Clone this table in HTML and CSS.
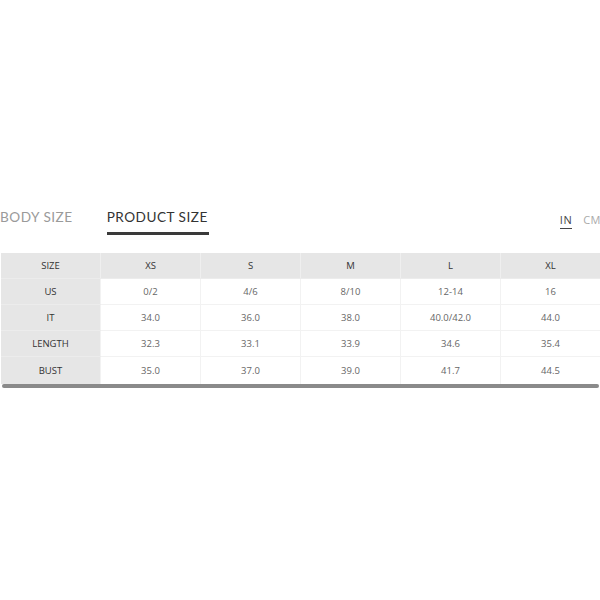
FILE: index.html
```html
<!DOCTYPE html>
<html>
<head>
<meta charset="utf-8">
<link rel="stylesheet" href="styles.css">
</head>
<body>
<div class="wrap">
  <div class="tabs">
    <div class="tab">BODY SIZE</div>
    <div class="tab active">PRODUCT SIZE</div>
    <div class="units">
      <span class="unit on">IN</span>
      <span class="unit">CM</span>
    </div>
  </div>
  <table class="chart">
    <tr class="head">
      <th>SIZE</th><th>XS</th><th>S</th><th>M</th><th>L</th><th>XL</th>
    </tr>
    <tr><th>US</th><td>0/2</td><td>4/6</td><td>8/10</td><td>12-14</td><td>16</td></tr>
    <tr><th>IT</th><td>34.0</td><td>36.0</td><td>38.0</td><td>40.0/42.0</td><td>44.0</td></tr>
    <tr><th>LENGTH</th><td>32.3</td><td>33.1</td><td>33.9</td><td>34.6</td><td>35.4</td></tr>
    <tr><th>BUST</th><td>35.0</td><td>37.0</td><td>39.0</td><td>41.7</td><td>44.5</td></tr>
  </table>
  <div class="bar"></div>
</div>
</body>
</html>
```
FILE: styles.css
```css
html, body { margin: 0; padding: 0; background: #fff; }
body { font-family: "Open Sans", "Liberation Sans", sans-serif; }
.wrap { padding: 208px 0 0 1px; width: 598px; }
.tabs { display: flex; align-items: flex-start; height: 45px; }
.tab {
  font-family: "Lato", "Open Sans", sans-serif;
  font-size: 13.6px; letter-spacing: 0.5px; color: #9a9a9a;
  margin-left: -1px; padding-bottom: 6px; line-height: 18px;
}
.tab.active {
  color: #333; margin-left: 34px; border-bottom: 3px solid #3a3a3a;
  padding-right: 1px;
}
.units { margin-left: auto; display: flex; gap: 11px; padding-top: 5px; margin-right: -2px; }
.unit {
  font-size: 11px; letter-spacing: 0.5px; color: #aaa; line-height: 14px;
}
.unit.on { color: #444; border-bottom: 1px solid #444; padding-bottom: 1px; }
.chart {
  width: 598px; border-collapse: collapse; table-layout: fixed;
  font-size: 9.5px;
}
.chart th, .chart td {
  height: 25px; padding: 0; text-align: center; vertical-align: middle;
}
.chart th {
  width: 99px; background: #e6e6e6; color: #333; font-weight: 400;
  border-bottom: 1px solid #ececec;
}
.chart td { color: #666; border: 1px solid #f2f2f2; border-top: 0; }
.chart tr:last-child th, .chart tr:last-child td { border-bottom: 0; height: 27px; }
.chart .head th { border-right: 1px solid #efefef; height: 25px; }
.chart .head th:last-child { border-right: 0; }
.chart td:last-child { border-right: 0; }
.bar { height: 4px; background: #8a8a8a; border-radius: 2px; margin: 0 0 0 1px; width: 597px; }
```
